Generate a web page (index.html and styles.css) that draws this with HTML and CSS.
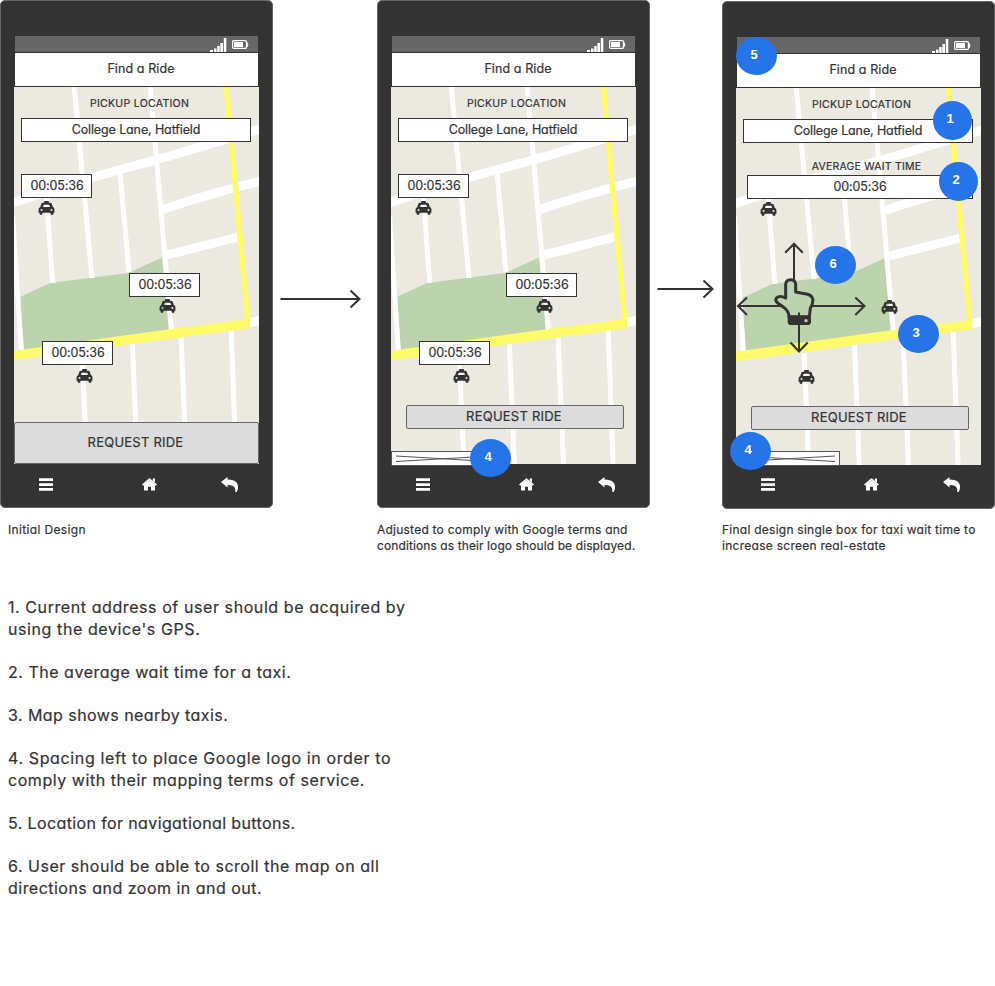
FILE: index.html
```
<!DOCTYPE html>
<html lang="en">
<head>
<meta charset="utf-8">
<title>Find a Ride</title>
<link rel="stylesheet" href="styles.css">
</head>
<body>
<svg class="defs" width="0" height="0" aria-hidden="true">
  <symbol id="streets" viewBox="14 87 245 377">
    <rect x="14" y="87" width="245" height="377" fill="#ece9e1"/>
    <path fill="#bcd4ad" d="M20 297L50 283L128 273L162 257.500L169.500 330L24 352Z"/>
    <g fill="none" stroke="#fff" stroke-width="5">
      <path d="M74 84L92 278M150 84L171.500 332M120 172L129 272M46 193L52.800 283M12.500 215L21.500 354M82 352L87 466M132.300 340L137.300 466M181 335L186.600 466M231 325L236.200 466"/>
      <path stroke-width="9" d="M10 203.500L90 178L170 156L262 128.500M163 209.500Q195 198 262 180.500M167 255L238 237M248 323L262 320"/>
    </g>
    <g fill="none" stroke="#fffa6a">
      <path stroke-width="5.500" d="M226 84L248 322"/>
      <path stroke-width="9.500" d="M10 356L170 334L250 323.500"/>
    </g>
  </symbol>
  <symbol id="taxi" viewBox="0 0 17 15">
    <path fill="#333" fill-rule="evenodd" d="M6 0h5v2h1.500q1.200 0 1.700 1.300l1.100 3.200q1.700.5 1.700 2.300v3.700h-1v1q0 1.500-1.600 1.500t-1.600-1.500v-1H4.200v1q0 1.500-1.600 1.500T1 13.500v-1H0V9q0-1.800 1.700-2.300l1.100-3.200Q3.300 2 4.500 2H6zM5.500 4L4.700 6.500h7.600L11.500 4zM3.200 8.600a1.100 1.100 0 100 2.200 1.100 1.100 0 000-2.200zM13.800 8.600a1.100 1.100 0 100 2.200 1.100 1.100 0 000-2.200z"/>
  </symbol>
  <symbol id="signal" viewBox="0 0 17 14">
    <path fill="#fff" d="M0 12h3v2H0zM4 10.500h2.500V14H4zM7.200 8h2.500v6H7.200zM10.300 5H13v9h-2.700zM13.800 0h2.500v14h-2.500z"/>
  </symbol>
  <symbol id="battery" viewBox="0 0 17 9">
    <rect x=".6" y=".6" width="13.800" height="7.800" rx="1" fill="none" stroke="#fff" stroke-width="1.200"/>
    <path fill="#fff" d="M2 2h9v5H2zM14 2h1.500q1.500 2.500 0 5H14z"/>
  </symbol>
  <symbol id="menu" viewBox="0 0 14 13">
    <path fill="#fff" d="M0 .3h14v2.700H0zM0 5.200h14v2.700H0zM0 10h14v2.700H0z"/>
  </symbol>
  <symbol id="home" viewBox="0 0 15 13">
    <path fill="#fff" d="M7.500 2.200l5.500 4.600v5.700H9V8.800H6v3.700H2V6.800z"/>
    <path fill="none" stroke="#fff" stroke-width="1.700" d="M.6 7.200l6.900-6 6.900 6"/>
    <path fill="#fff" d="M10.800 .6h2.200v4l-2.200-1.700z"/>
  </symbol>
  <symbol id="reply" viewBox="0 0 17 15">
    <path fill="#fff" d="M0 5L6.500 0v2.500q6.300 0 8.800 2.800 3.300 4 .4 9.700h-1.500Q15.500 8 6.500 8v2.500z"/>
  </symbol>
</svg>

<main class="board">
  <section class="designs">
    <figure>
      <div class="phone">
        <div class="status"><svg width="17" height="14"><use href="#signal"/></svg><svg class="battery" width="17" height="9"><use href="#battery"/></svg></div>
        <h1 class="title">Find a Ride</h1>
        <div class="map">
          <svg class="streets" width="245" height="377"><use href="#streets"/></svg>
          <p class="label pickup">PICKUP LOCATION</p>
          <p class="field address">College Lane, Hatfield</p>
          <p class="field time t1">00:05:36</p>
          <p class="field time t2">00:05:36</p>
          <p class="field time t3">00:05:36</p>
          <svg class="taxi c1"><use href="#taxi"/></svg>
          <svg class="taxi c2"><use href="#taxi"/></svg>
          <svg class="taxi c3"><use href="#taxi"/></svg>
          <button class="request docked">REQUEST RIDE</button>
        </div>
        <nav class="nav"><svg width="14" height="13"><use href="#menu"/></svg><svg class="home" width="15" height="13"><use href="#home"/></svg><svg width="17" height="15"><use href="#reply"/></svg></nav>
      </div>
      <figcaption class="first">Initial Design</figcaption>
    </figure>

    <svg class="step" width="104" height="508" viewBox="273 0 104 508"><path d="M280.500 299H359M350.500 290.500L359.500 299L350.500 307.500"/></svg>

    <figure>
      <div class="phone">
        <div class="status"><svg width="17" height="14"><use href="#signal"/></svg><svg class="battery" width="17" height="9"><use href="#battery"/></svg></div>
        <h1 class="title">Find a Ride</h1>
        <div class="map">
          <svg class="streets" width="245" height="377"><use href="#streets"/></svg>
          <p class="label pickup">PICKUP LOCATION</p>
          <p class="field address">College Lane, Hatfield</p>
          <p class="field time t1">00:05:36</p>
          <p class="field time t2">00:05:36</p>
          <p class="field time t3">00:05:36</p>
          <svg class="taxi c1"><use href="#taxi"/></svg>
          <svg class="taxi c2"><use href="#taxi"/></svg>
          <svg class="taxi c3"><use href="#taxi"/></svg>
          <button class="request">REQUEST RIDE</button>
          <svg class="logo" width="104" height="15"><rect x=".5" y=".5" width="103" height="14"/><path d="M5 5L99 10.500M5 10.500L99 5"/></svg>
        </div>
        <nav class="nav"><svg width="14" height="13"><use href="#menu"/></svg><svg class="home" width="15" height="13"><use href="#home"/></svg><svg width="17" height="15"><use href="#reply"/></svg></nav>
        <span class="badge b4">4</span>
      </div>
      <figcaption><span class="l1">Adjusted to comply with Google terms and</span><br><span class="l2">conditions as their logo should be displayed.</span></figcaption>
    </figure>

    <svg class="step" width="72" height="508" viewBox="650 0 72 508"><path d="M657.500 289H712M703.500 280.500L712.500 289L703.500 297.500"/></svg>

    <figure class="final">
      <div class="phone">
        <div class="status"><svg width="17" height="14"><use href="#signal"/></svg><svg class="battery" width="17" height="9"><use href="#battery"/></svg></div>
        <h1 class="title">Find a Ride</h1>
        <div class="map">
          <svg class="streets" width="245" height="377"><use href="#streets"/></svg>
          <p class="label pickup">PICKUP LOCATION</p>
          <p class="field address">College Lane, Hatfield</p>
          <p class="label wait">AVERAGE WAIT TIME</p>
          <p class="field average">00:05:36</p>
          <svg class="taxi c1"><use href="#taxi"/></svg>
          <svg class="taxi c2"><use href="#taxi"/></svg>
          <svg class="taxi c3"><use href="#taxi"/></svg>
          <svg class="gesture" width="245" height="377" viewBox="14 87 245 377">
            <path class="axis" d="M72 280V243M63.200 251.700L72 242.700L80.800 251.700M16 305H142.500M25 296.500L16 305L25 314M133.300 296.500L142.500 305L133.300 314"/>
            <g transform="translate(38 269) scale(.33333)">
              <path fill="#bcd4ad" stroke="#333" stroke-width="9" stroke-linejoin="round" d="M77 84V43Q78 29 92 29Q106 29 107 43V66L122 69L140 72Q157 76 159 90Q158 103 151 115L148 140H87Q87 126 74 114L54 100Q44 92 49 84Q59 75 77 84Z"/>
              <path fill="#333" d="M83 137H153V158L148 165H88L83 159Z"/>
              <circle cx="138" cy="152" r="5" fill="#bcd4ad"/>
            </g>
            <path class="axis" d="M77 311.500V350M68.500 341.500L77 350.500L85.700 341.500"/>
          </svg>
          <button class="request">REQUEST RIDE</button>
          <svg class="logo" width="104" height="15"><rect x=".5" y=".5" width="103" height="14"/><path d="M5 5L99 10.500M5 10.500L99 5"/></svg>
        </div>
        <nav class="nav"><svg width="14" height="13"><use href="#menu"/></svg><svg class="home" width="15" height="13"><use href="#home"/></svg><svg width="17" height="15"><use href="#reply"/></svg></nav>
        <span class="badge f1">1</span>
        <span class="badge f2">2</span>
        <span class="badge f3">3</span>
        <span class="badge f4">4</span>
        <span class="badge f5">5</span>
        <span class="badge f6">6</span>
      </div>
      <figcaption><span class="l3">Final design single box for taxi wait time to</span><br><span class="l4">increase screen real-estate</span></figcaption>
    </figure>
  </section>

  <section class="notes">
    <p><span class="n1">1. Current address of user should be acquired by</span><br><span class="n2">using the device's GPS.</span></p>
    <p><span class="n3">2. The average wait time for a taxi.</span></p>
    <p><span class="n4">3. Map shows nearby taxis.</span></p>
    <p><span class="n5">4. Spacing left to place Google logo in order to</span><br><span class="n6">comply with their mapping terms of service.</span></p>
    <p><span class="n7">5. Location for navigational buttons.</span></p>
    <p><span class="n8">6. User should be able to scroll the map on all</span><br><span class="n9">directions and zoom in and out.</span></p>
  </section>
</main>
</body>
</html>
```
FILE: styles.css
```
* { box-sizing: border-box; }
body {
  margin: 0;
  background: #fff;
  color: #333;
  font-family: Inter, "Liberation Sans", sans-serif;
  font-feature-settings: "cv11" 1;
  -webkit-text-stroke: .2px;
}
p, h1, figure { margin: 0; }
svg { display: block; flex: none; }
.defs { position: absolute; }
.board { width: 995px; height: 986px; overflow: hidden; }
.designs { display: flex; align-items: flex-start; height: 597px; }
figure { width: 273px; flex: none; }
.final { margin-top: 1px; }
.step { fill: none; stroke: #333; stroke-width: 2; }

.phone {
  position: relative;
  width: 273px;
  height: 508px;
  padding: 35px 13px 0;
  background: #333;
  border: 1px solid #666;
  border-radius: 5px;
}
.status {
  display: flex;
  justify-content: flex-end;
  gap: 5px;
  height: 16px;
  margin: 0 1px;
  padding: 2px 9px 0 0;
  background: #666;
}
.battery { margin-top: 2px; }
.title {
  height: 35px;
  margin: 0 1px;
  padding-left: 9px;
  background: #fff;
  border: solid #333;
  border-width: 1px 0;
  font-size: 12.5px;
  font-weight: 400;
  line-height: 32px;
  letter-spacing: .1px;
  text-align: center;
}
.map { position: relative; width: 245px; height: 377px; }
.label {
  position: absolute;
  font-size: 10.5px;
  line-height: 14px;
  text-align: center;
  white-space: nowrap;
}
.pickup { left: 65px; top: 10px; width: 121px; letter-spacing: .3px; }
.wait { left: 65px; top: 72px; width: 131px; letter-spacing: .22px; }
.field {
  position: absolute;
  height: 24px;
  background: #fff;
  border: 1px solid #333;
  font-size: 12.5px;
  line-height: 21px;
  text-align: center;
  white-space: nowrap;
}
.address { left: 7px; top: 31px; width: 230px; letter-spacing: -.12px; }
.average { left: 11px; top: 87px; width: 226px; letter-spacing: -.1px; }
.time { width: 71px; padding-left: 1px; letter-spacing: -.1px; }
.t1 { left: 7px; top: 87px; }
.t2 { left: 115px; top: 186px; }
.t3 { left: 28px; top: 254px; }
.taxi { position: absolute; width: 17px; height: 14px; }
.c1 { left: 24px; top: 114px; }
.c2 { left: 145px; top: 212px; }
.c3 { left: 62px; top: 282px; }
.request {
  position: absolute;
  left: 15px;
  top: 318px;
  width: 218px;
  height: 24px;
  padding: 0 2px 2px 0;
  background: #dcdcdc;
  border: 1px solid #666;
  border-radius: 2px;
  color: #333;
  font: 13px Inter, "Liberation Sans", sans-serif;
  letter-spacing: .23px;
}
.docked { left: 0; top: 335px; width: 245px; height: 42px; }
.logo { position: absolute; left: 0; top: 364px; fill: #fff; stroke: #555; stroke-width: 1; }
.final .logo { top: 363px; }
.gesture { position: absolute; left: 0; top: 0; }
.axis { fill: none; stroke: #333; stroke-width: 2; }
.nav {
  display: flex;
  align-items: center;
  justify-content: space-between;
  height: 40px;
  padding: 0 21px 0 25px;
}
.final .nav { height: 39px; }
.home { margin-left: 24px; }

.badge {
  position: absolute;
  width: 41px;
  height: 38px;
  padding-right: 5px;
  border-radius: 50%;
  background: #2675e8;
  color: #fff;
  font: bold 13px/36px "Liberation Sans", sans-serif;
  text-align: center;
  -webkit-text-stroke: 0;
}
.b4 { left: 92px; top: 438px; }
.f1, .f2 { width: 39px; height: 39px; }
.f1 { left: 210px; top: 99px; }
.f2 { left: 216px; top: 160px; }
.f3 { left: 175px; top: 313px; }
.f4 { left: 7px; top: 430px; }
.f5 { left: 13px; top: 35px; }
.f6 { left: 92px; top: 244px; }

figcaption {
  padding-top: 14px;
  font-size: 12px;
  line-height: 16px;
  white-space: nowrap;
}
.final figcaption { padding-top: 13px; }
.first { padding-left: 8px; letter-spacing: .35px; }
.l1 { letter-spacing: .23px; }
.l2 { letter-spacing: .1px; }
.l3 { letter-spacing: .25px; }
.l4 { letter-spacing: .27px; }

.notes {
  padding-left: 8px;
  font-size: 16px;
  line-height: 21.6px;
  white-space: nowrap;
}
.notes p { margin-bottom: 21.6px; }
.n1 { letter-spacing: .58px; }
.n2 { letter-spacing: .59px; }
.n3 { letter-spacing: .52px; }
.n4 { letter-spacing: .44px; }
.n5 { letter-spacing: .63px; }
.n6 { letter-spacing: .55px; }
.n7 { letter-spacing: .38px; }
.n8 { letter-spacing: .52px; }
.n9 { letter-spacing: .48px; }
```
